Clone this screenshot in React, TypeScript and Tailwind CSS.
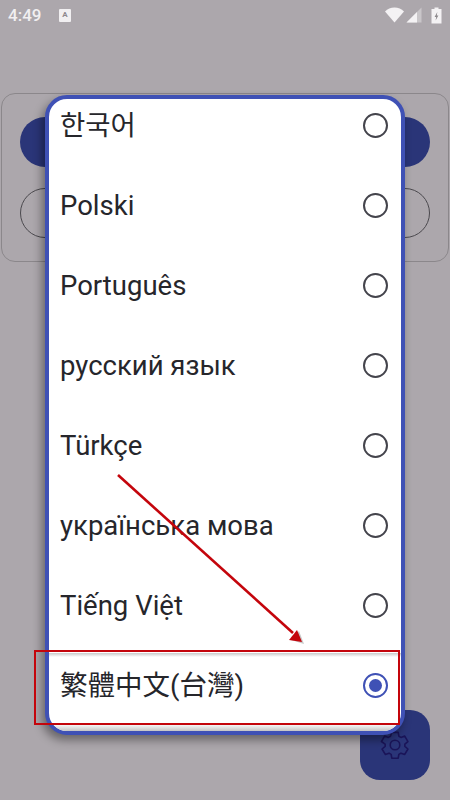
const languages = [
  '한국어',
  'Polski',
  'Português',
  'русский язык',
  'Türkçe',
  'українська мова',
  'Tiếng Việt',
  '繁體中文(台灣)',
];

function StatusBar() {
  return (
    <div className="flex h-[30px] items-center pl-2 pr-2 text-[#f1eff1]">
      <span className="w-[34px] text-[17px] font-medium leading-none">4:49</span>
      <div className="ml-[17px] flex h-[13px] w-[12px] items-center justify-center rounded-[1px] bg-[#f1eff1] text-[8px] font-bold text-[#8d898d]">
        A
      </div>
      <div className="ml-auto flex items-center">
        <svg width="19" height="16" viewBox="0 0 19 16" className="mr-[2px]">
          <path d="M0 4.5C2.5 2 5.8 0.5 9.5 0.5S16.5 2 19 4.5L9.5 15.5Z" fill="#f4f2f4" />
        </svg>
        <svg width="16" height="16" viewBox="0 0 16 16" className="mr-[9px]">
          <path d="M15.5 0.5V15.5H0.5Z" fill="#c9c6c9" />
          <path d="M11 5V15.5H0.5Z" fill="#f4f2f4" />
        </svg>
        <svg width="11" height="17" viewBox="0 0 11 17">
          <path d="M3.5 0.5H7.5V2H10.5V16.5H0.5V2H3.5Z" fill="#f4f2f4" />
          <path d="M6.3 5L3.6 10H5.2L4.6 13.6L7.4 8.4H5.8Z" fill="#8d898d" />
        </svg>
      </div>
    </div>
  );
}

function LanguageRow({ label, selected }: { label: string; selected: boolean }) {
  return (
    <div className="flex h-[80px] shrink-0 items-center justify-between pl-[7px] pr-[7px]">
      <span className="pt-[2px] text-[27.5px] leading-none text-[#26262b]">{label}</span>
      <div
        className={
          selected
            ? 'flex h-[25px] w-[25px] items-center justify-center rounded-full border-[2px] border-[#3f51b5]'
            : 'h-[25px] w-[25px] rounded-full border-[2px] border-[#44444c]'
        }
      >
        {selected && <div className="h-[13px] w-[13px] rounded-full bg-[#3f51b5]" />}
      </div>
    </div>
  );
}

export default function App() {
  return (
    <div
      className="relative h-[800px] w-[450px] overflow-hidden bg-[#aca7ac]"
      style={{ fontFamily: 'Roboto, "Noto Sans CJK KR", "Noto Sans CJK TC", sans-serif' }}
    >
      <StatusBar />

      {/* page behind the dialog */}
      <div className="mx-[1px] mt-[63px] flex h-[169px] flex-col gap-[21px] rounded-[14px] border border-[#8b878b] px-[18px] pt-[23px]">
        <div className="h-[50px] rounded-full bg-[#2a3578]" />
        <div className="h-[50px] rounded-full border border-[#4b494e]" />
      </div>
      <div className="ml-[360px] mt-[448px] flex h-[70px] w-[70px] items-center justify-center rounded-[20px] bg-[#2a3578]">
        <svg width="32" height="32" viewBox="0 0 24 24" fill="none" stroke="#1a1458" strokeWidth="1.2">
          <path d="M9.6 2.5h4.8l.5 2.9 1.6.9 2.8-1 2.4 4.1-2.3 1.9v1.8l2.3 1.9-2.4 4.1-2.8-1-1.6.9-.5 2.9H9.6l-.5-2.9-1.6-.9-2.8 1-2.4-4.1 2.3-1.9v-1.8L1.8 9.4l2.4-4.1 2.8 1 1.6-.9Z" strokeLinejoin="round" />
          <circle cx="12" cy="12" r="3.6" />
        </svg>
      </div>

      {/* language dialog */}
      <div className="absolute left-[45px] top-[95px] h-[640px] w-[360px] overflow-hidden rounded-[22px] border-[4px] border-[#3f51b5] bg-white pl-[4px] pr-[4px] shadow-[-3px_5px_10px_rgba(0,0,0,0.4)]">
        <div className="-mt-[14px] flex flex-col pr-[2px]">
          {languages.map((label, i) => (
            <LanguageRow key={label} label={label} selected={i === languages.length - 1} />
          ))}
        </div>
        <div className="absolute left-0 right-0 top-[554px] h-[4px] bg-gradient-to-b from-[#c9c9c9] to-white" />
        <div className="absolute bottom-0 left-0 right-0 h-[7px] bg-gradient-to-b from-white to-[#c4c4c4]" />
      </div>

      {/* red annotation */}
      <div className="absolute left-[34px] top-[650px] h-[75px] w-[366px] border-[2px] border-[#c4050c]" />
      <svg className="absolute left-0 top-0" width="450" height="800" viewBox="0 0 450 800">
        <g transform="translate(2 2)" opacity="0.22">
          <path d="M302 642L289 638L297 629Z" fill="#000" />
        </g>
        <line x1="118" y1="475" x2="293" y2="633" stroke="#c4050c" strokeWidth="2.6" />
        <path d="M302 642L289 640L297 630Z" fill="#c4050c" />
      </svg>
    </div>
  );
}
